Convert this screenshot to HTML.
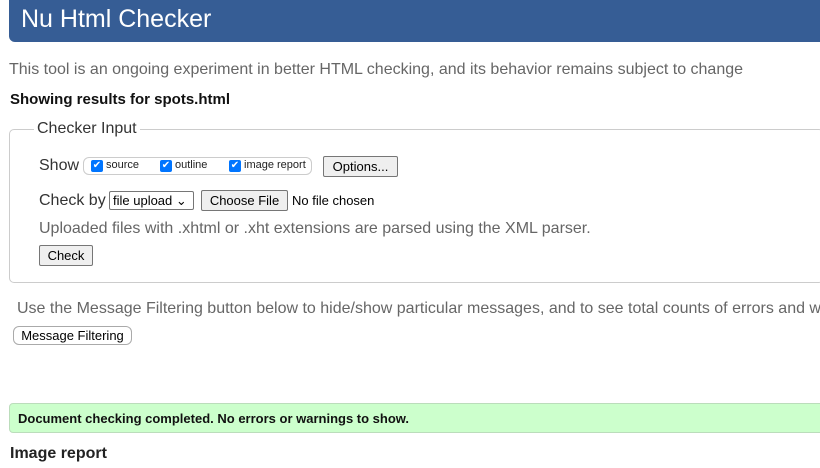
<!DOCTYPE html>
<html><head><style>
html,body{margin:0;width:820px;height:468px;overflow:hidden}
body{background:#fff;font-family:"Liberation Sans",Arial,sans-serif;position:relative}
.a{position:absolute;white-space:nowrap}
.hdr{left:9px;top:-5px;width:811px;height:47px;background:#365d95;border-radius:0 0 0 6px}
.cb{display:inline-block;width:12px;height:12px;background:#0075ff;border-radius:2px;color:#fff;font-size:10px;line-height:12px;text-align:center;vertical-align:0px;margin-right:3px}
.btn{position:absolute;background:#efefef;border:1px solid #767676;border-radius:2px;font-size:13px;color:#000;text-align:center;box-sizing:border-box}
.w{overflow:hidden}
</style></head><body>
<div class="a hdr"></div>
<div class="a" style="left:21px;top:5px;font-size:25px;color:#fff">Nu Html Checker</div>
<div class="a" style="left:9px;top:61px;font-size:16px;color:#666">This tool is an ongoing experiment in better HTML checking, and its behavior remains subject to change</div>
<div class="a" style="left:10px;top:91px;font-size:15px;font-weight:bold;color:#111">Showing results for spots.html</div>
<div class="a" style="left:9px;top:129px;width:815px;height:154px;border:1px solid #ccc;border-radius:5px;box-sizing:border-box"></div>
<div class="a" style="left:34px;top:120px;font-size:16px;color:#333;background:#fff;padding:0 3px">Checker Input</div>
<div class="a" style="left:39px;top:157px;font-size:16px;color:#333">Show</div>
<div class="a" style="left:83px;top:157px;width:229px;height:18px;border:1px solid #ccc;border-radius:6px;box-sizing:border-box"></div>
<div class="a" style="left:91px;top:159px;font-size:11px;color:#222"><span class="cb">✔</span>source</div>
<div class="a" style="left:160px;top:159px;font-size:11px;color:#222"><span class="cb">✔</span>outline</div>
<div class="a" style="left:229px;top:159px;font-size:11px;color:#222"><span class="cb">✔</span>image report</div>
<div class="btn" style="left:323px;top:156px;width:75px;height:21px;line-height:19px">Options...</div>
<div class="a" style="left:39px;top:192px;font-size:16px;color:#333">Check by</div>
<div class="a" style="left:109px;top:191px;width:85px;height:19px;border:1px solid #767676;border-radius:2px;box-sizing:border-box;font-size:13px;line-height:17px;padding-left:3px">file upload ⌄</div>
<div class="btn" style="left:201px;top:190px;width:87px;height:21px;line-height:19px">Choose File</div>
<div class="a" style="left:292px;top:193px;font-size:13px;color:#000">No file chosen</div>
<div class="a" style="left:39px;top:220px;font-size:16px;color:#666">Uploaded files with .xhtml or .xht extensions are parsed using the XML parser.</div>
<div class="btn" style="left:39px;top:245px;width:54px;height:21px;line-height:19px">Check</div>
<div class="a w" style="left:17px;top:300px;width:803px;font-size:16px;color:#666">Use the Message Filtering button below to hide/show particular messages, and to see total counts of errors and warnings.</div>
<div class="a" style="left:13px;top:326px;width:119px;height:19px;border:1px solid #aaa;border-radius:6px;box-sizing:border-box;font-size:13px;line-height:17px;text-align:center">Message Filtering</div>
<div class="a" style="left:9px;top:403px;width:815px;height:30px;background:#ccffcc;border:1px solid #bdb;border-radius:4px;box-sizing:border-box"></div>
<div class="a" style="left:18px;top:411px;font-size:13px;font-weight:bold;color:#111">Document checking completed. No errors or warnings to show.</div>
<div class="a" style="left:10px;top:445px;font-size:16px;font-weight:bold;color:#222">Image report</div>
</body></html>
